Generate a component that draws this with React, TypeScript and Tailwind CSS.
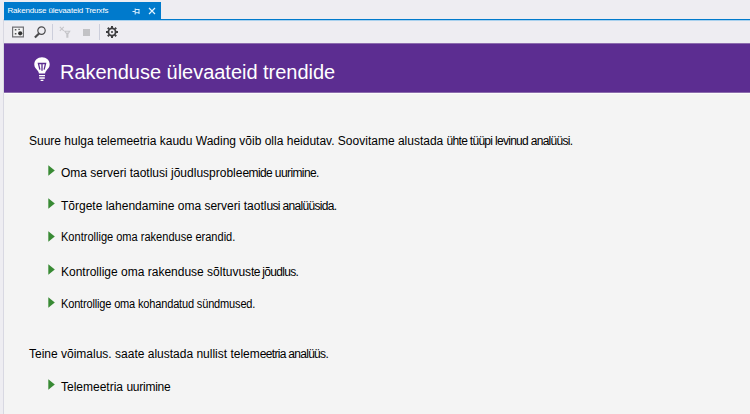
import React from "react";

type Run = { text: string; tracking?: string };

function Line({ runs }: { runs: Run[] }) {
  return (
    <span className="whitespace-pre">
      {runs.map((r, i) => (
        <span key={i} className={r.tracking}>{r.text}</span>
      ))}
    </span>
  );
}

const items: { gap: string; arrow: string; runs: Run[] }[] = [
  { gap: "mt-4", arrow: "mt-0", runs: [{ text: "Oma serveri taotlusi jõudlusproble" }, { text: "emide uurimine.", tracking: "tracking-[-0.6px]" }] },
  { gap: "mt-[17px]", arrow: "mt-0", runs: [{ text: "Tõrgete lahendamine oma serveri taotl" }, { text: "usi analüüsida.", tracking: "tracking-[-0.67px]" }] },
  { gap: "mt-[15px]", arrow: "mt-[2px]", runs: [{ text: "Kontrollige oma rakenduse erandid.", tracking: "inline-block origin-left scale-x-[0.92]" }] },
  { gap: "mt-[19px]", arrow: "mt-0", runs: [{ text: "Kontrollige oma rakenduse sõltuvus" }, { text: "te jõudlus.", tracking: "tracking-[-0.7px]" }] },
  { gap: "mt-4", arrow: "mt-[1px]", runs: [{ text: "Kontrollige oma kohandatud sündmused.", tracking: "inline-block origin-left scale-x-[0.92] tracking-[-0.19px]" }] },
];

function Item({ gap, arrow, runs }: { gap: string; arrow: string; runs: Run[] }) {
  return (
    <li className={`flex h-4 items-start pl-[19px] ${gap}`}>
      <svg className={`mr-[6px] h-[11px] w-[7px] shrink-0 ${arrow}`} viewBox="0 0 7 11">
        <path d="M.3.3 6.8 5.5.3 10.7Z" fill="#388a34" />
      </svg>
      <Line runs={runs} />
    </li>
  );
}

function Tab() {
  return (
    <div className="ml-px flex h-[17px] w-[157px] items-center bg-[#007acc] pl-[3.5px] text-white">
      <span className="w-[124.5px] whitespace-nowrap text-[8px] leading-[15px] tracking-[-0.18px]">Rakenduse ülevaateid Trerxfs</span>
      <svg className="mt-px h-[7px] w-[8px]" viewBox="0 0 8 7" fill="none" stroke="#d8efff">
        <path d="M0.5 3.5H3M3.2.5v6M3.2 1.5h4M7 1v5M3.2 4.7h4" />
      </svg>
      <svg className="ml-[8px] mt-px h-[8px] w-[8px]" viewBox="0 0 8 8" stroke="#e5f5ff" strokeWidth="1.2">
        <path d="m1 1 6 6M7 1 1 7" />
      </svg>
    </div>
  );
}

function Toolbar() {
  return (
    <div className="flex h-[22px] items-center pl-2">
      <svg className="h-3 w-3" viewBox="0 0 12 12">
        <path d="M.6 1.1h10.8v9.8H.6Z" fill="#f3f3f4" stroke="#717175" strokeWidth="1.2" />
        <path d="M2.8 3h1.6v1.6H2.8zM6.4 2.7h1.4v1.4H6.4zM2.8 7h1.6v1.6H2.8z" fill="#555" />
        <circle cx="8.2" cy="7.3" r="2.1" fill="#333" />
      </svg>
      <svg className="ml-[10px] h-[13px] w-3" viewBox="0 0 12 13" fill="none" stroke="#4b4b4d">
        <circle cx="7.5" cy="4.6" r="3.7" strokeWidth="1.2" />
        <path d="M5 7.4.9 11.5" strokeWidth="2.1" />
      </svg>
      <span className="ml-[6px] h-4 w-px bg-[#cccedb]" />
      <svg className="ml-[6px] h-3 w-3" viewBox="0 0 12 12" fill="none" stroke="#c5c5c9">
        <path d="m.8.8 4 4M4.8.8l-4 4" strokeWidth="1.1" />
        <path d="M4.8 4.8h6.9L9.4 8.3v3.5H7.3V8.3Z" fill="#c5c5c9" stroke="none" />
        <path d="M7.2 6.2h2.2" stroke="#eeedf2" strokeWidth=".9" />
      </svg>
      <span className="ml-[12px] h-[7px] w-[7px] bg-[#c2c2c5]" />
      <span className="ml-[9px] h-4 w-px bg-[#cccedb]" />
      <svg className="ml-[6px] h-3 w-3" viewBox="0 0 12 12" fill="none" stroke="#3e3e40">
        <circle cx="6" cy="6" r="3.6" strokeWidth="1.8" />
        <path d="M6 0v2M6 10v2M0 6h2M10 6h2M1.8 1.8l1.3 1.3M8.9 8.9l1.3 1.3M10.2 1.8 8.9 3.1M3.1 8.9l-1.3 1.3" strokeWidth="2" />
        <circle cx="6" cy="6" r="1" fill="#3e3e40" stroke="none" />
      </svg>
    </div>
  );
}

export default function App() {
  return (
    <div className="h-[414px] w-[750px] overflow-hidden bg-[#eeedf2] pl-[3px] pt-[2px] font-['Liberation_Sans',Arial,sans-serif] text-xs leading-4 text-black">
      <Tab />
      <div className="flex h-[395px] flex-col border-l border-[#d8d8e2]">
        <div className="h-px shrink-0 bg-[#007acc]" />
        <div className="h-px shrink-0 bg-[#a9d1ee]" />
        <Toolbar />
        <header className="flex h-[50px] shrink-0 items-center border-y border-t-[#8c6cae] border-b-[#8c6cae] bg-[#5c2d91] pl-[30px] text-white">
          <svg className="mt-[3px] h-[25px] w-4" viewBox="0 0 16 25" fill="none">
            <path d="M8 .3C3.6.3.3 3.4.3 7.5c0 2.8 1.9 4.4 3.4 6.2.8.9 1.1 1.8 1.2 2.8h6.2c.1-1 .4-1.9 1.2-2.8 1.5-1.8 3.4-3.4 3.4-6.2C15.7 3.4 12.4.3 8 .3Z" fill="white" />
            <path d="M5.9 12.7 4.4 6.5h7.2l-1.5 6.2M8 6.5v7.3" stroke="#5c2d91" strokeWidth="1.3" />
            <path d="M5 18.6h6M5.2 21h5.6M6.6 23.3h2.8" stroke="white" strokeWidth="1.3" />
          </svg>
          <h1 className="ml-[10px] mt-[8px] whitespace-nowrap text-[20px] leading-6 tracking-[-0.02px]">Rakenduse ülevaateid trendide</h1>
        </header>
        <main className="flex-1 border-t border-[#fcfcfc] bg-[#f4f4f4] pl-[25px] pt-[39px]">
          <p className="h-4"><Line runs={[{ text: "Suure hulga telemeetria kaudu Wading võib olla heidutav. Soovitame alustada " }, { text: "ühte tüüpi levinud analüüsi.", tracking: "tracking-[-0.7px]" }]} /></p>
          <ul>{items.map((item, i) => <Item key={i} {...item} />)}</ul>
          <p className="mt-[34px] h-4"><Line runs={[{ text: "Teine võimalus. saate alustada nullist telem" }, { text: "eetria analüüs.", tracking: "tracking-[-0.7px]" }]} /></p>
          <ul><Item gap="mt-[17px]" arrow="mt-0" runs={[{ text: "Telemeetria " }, { text: "uurimine", tracking: "tracking-[-0.25px]" }]} /></ul>
        </main>
      </div>
    </div>
  );
}
